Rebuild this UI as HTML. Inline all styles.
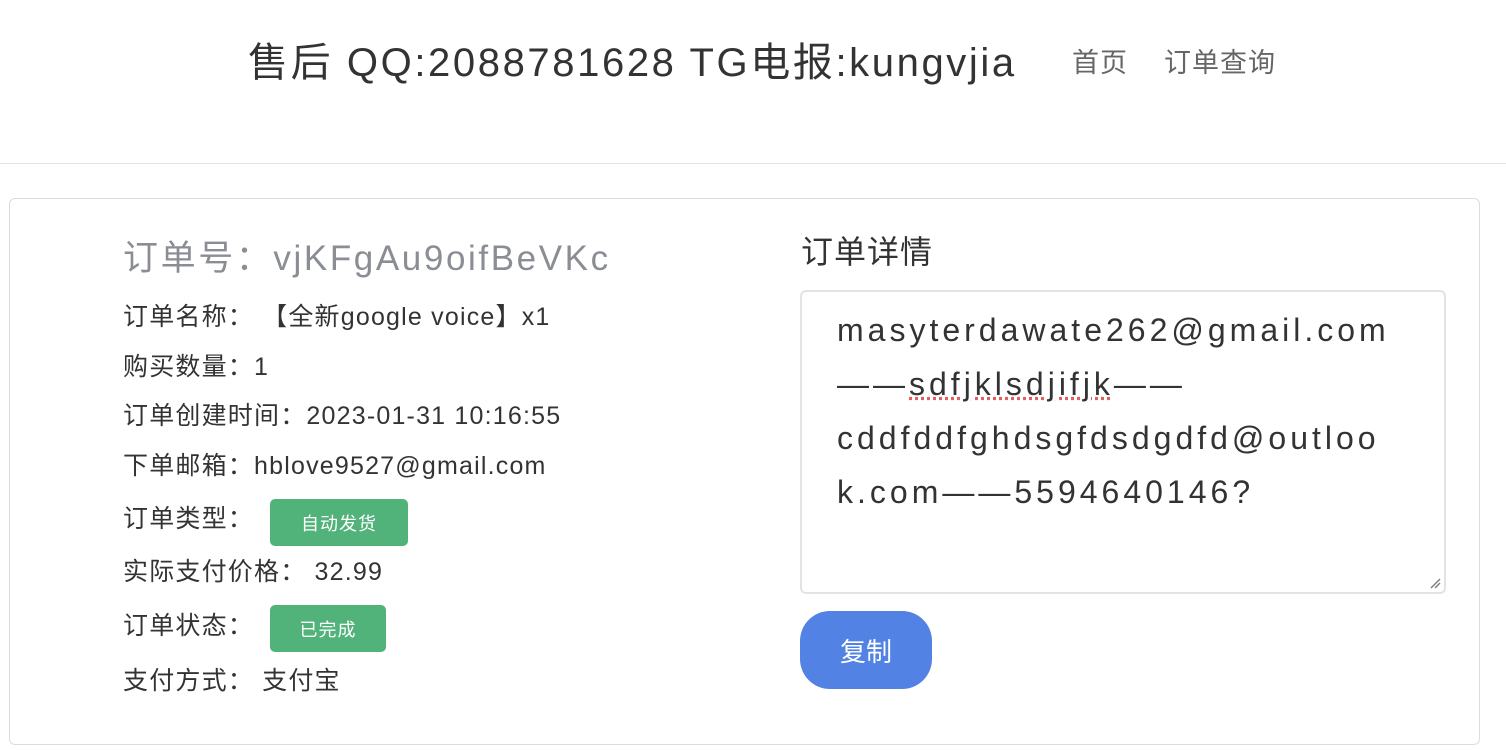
<!DOCTYPE html>
<html><head><meta charset="utf-8"><style>
*{margin:0;padding:0;box-sizing:border-box}
body{width:1506px;height:750px;background:#fff;font-family:"Liberation Sans","Noto Sans CJK SC",sans-serif;color:#333;position:relative;overflow:hidden}
.a{position:absolute;white-space:nowrap;line-height:1}
.hr{position:absolute;left:0;top:163px;width:1506px;height:1px;background:#e2e2e2}
.card{position:absolute;left:9px;top:198px;width:1471px;height:547px;border:1px solid #dcdcdc;border-radius:6px}
.row{font-size:25px;color:#333;left:123px;letter-spacing:1.2px}
.badge{position:absolute;background:#52b37a;color:#fff;font-size:18px;border-radius:5px;display:flex;align-items:center;justify-content:center;letter-spacing:1px}
.ta{position:absolute;left:800px;top:290px;width:646px;height:304px;border:2px solid #e3e3e3;border-radius:6px}
.tl{font-size:32px;color:#333;left:837px;letter-spacing:4px}
</style></head><body>
<div class="a" style="left:248px;top:43px;font-size:40px;color:#333;letter-spacing:2.6px">售后 QQ:2088781628 TG电报:kungvjia</div>
<div class="a" style="left:1072px;top:50px;font-size:27px;color:#666;letter-spacing:1px">首页</div>
<div class="a" style="left:1164px;top:50px;font-size:27px;color:#666;letter-spacing:1px">订单查询</div>
<div class="hr"></div>
<div class="card"></div>
<div class="a" style="left:123px;top:241px;font-size:35px;color:#8a8d93;letter-spacing:2.6px">订单号：vjKFgAu9oifBeVKc</div>
<div class="a row" style="top:305px">订单名称： 【全新google voice】x1</div>
<div class="a row" style="top:355px">购买数量：1</div>
<div class="a row" style="top:404px">订单创建时间：2023-01-31 10:16:55</div>
<div class="a row" style="top:454px">下单邮箱：hblove9527@gmail.com</div>
<div class="a row" style="top:507px">订单类型：</div>
<div class="badge" style="left:270px;top:499px;width:138px;height:47px">自动发货</div>
<div class="a row" style="top:560px">实际支付价格： 32.99</div>
<div class="a row" style="top:614px">订单状态：</div>
<div class="badge" style="left:270px;top:605px;width:116px;height:47px">已完成</div>
<div class="a row" style="top:669px">支付方式： 支付宝</div>
<div class="a" style="left:801px;top:236px;font-size:32px;color:#333;letter-spacing:1px">订单详情</div>
<div class="ta"><svg style="position:absolute;right:3px;bottom:3px" width="12" height="12"><path d="M2 11L11 2M6 11L11 6" stroke="#777" stroke-width="1.3"/></svg></div>
<div class="a tl" style="top:314px">masyterdawate262@gmail.com</div>
<div class="a tl" style="top:368px">——<span style="text-decoration:underline dotted #e06060">sdfjklsdjifjk</span>——</div>
<div class="a tl" style="top:422px">cddfddfghdsgfdsdgdfd@outloo</div>
<div class="a tl" style="top:476px">k.com——5594640146?</div>
<div style="position:absolute;left:800px;top:611px;width:132px;height:78px;background:#5282e3;border-radius:30px;color:#fff;font-size:26px;display:flex;align-items:center;justify-content:center">复制</div>
</body></html>
